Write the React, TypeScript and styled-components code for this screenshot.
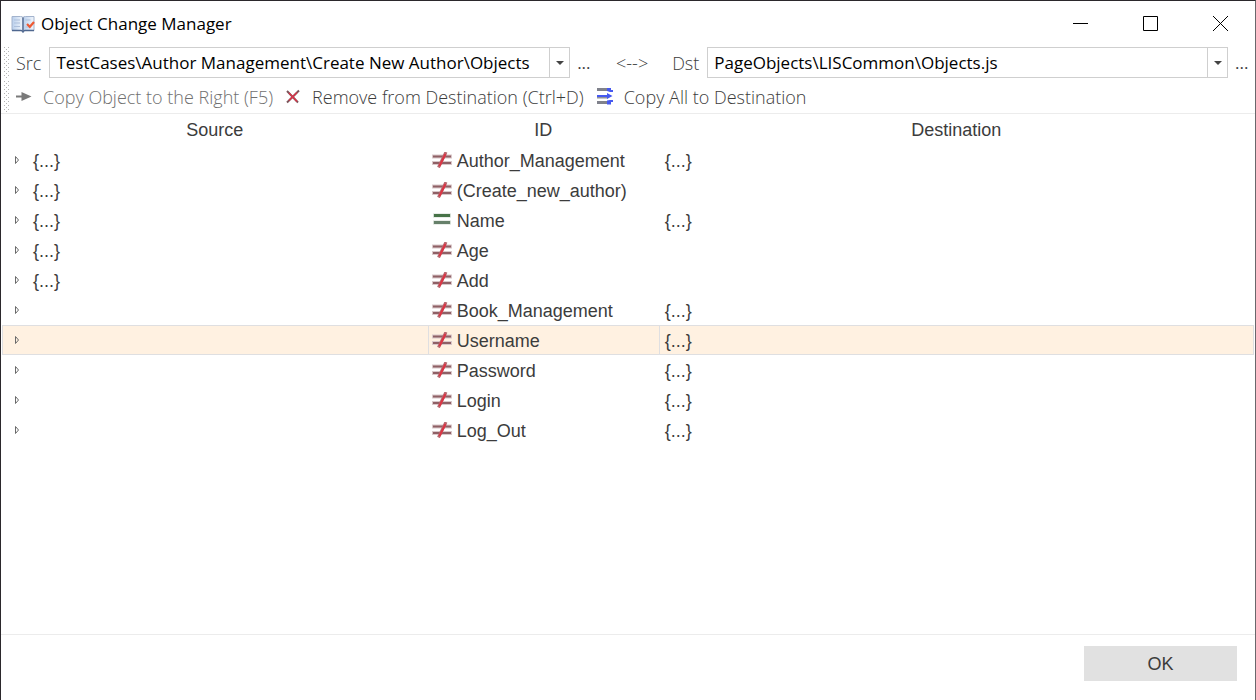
import React from "react";
import styled, { createGlobalStyle } from "styled-components";

const UI_FONT = '"Open Sans", "Noto Sans", sans-serif';
const GRID_FONT = '"Liberation Sans", Arial, sans-serif';

const GlobalStyle = createGlobalStyle`
  *, *::before, *::after { box-sizing: border-box; }
  body { margin: 0; background: #ffffff; }
`;

const Window = styled.main`
  display: flex;
  flex-direction: column;
  min-height: 100vh;
  border: 1px solid #2b282c;
  border-right-color: #6a686c;
  border-bottom: 0;
  background: #ffffff;
  color: #3c3c3c;
  font-family: ${UI_FONT};
  font-size: 18px;
  font-weight: 300;
  line-height: 24px;
`;

const TitleBar = styled.header`
  display: flex;
  align-items: center;
  height: 46px;
  padding-left: 10px;
`;

const Title = styled.h1`
  flex: 1;
  margin: 0 0 0 6px;
  color: #000000;
  font-size: 17px;
  font-weight: 400;
  line-height: 24px;
`;

const CaptionButton = styled.button`
  display: flex;
  align-self: flex-start;
  align-items: center;
  justify-content: center;
  width: 70px;
  height: 44px;
  padding: 0;
  border: 0;
  background: transparent;
`;

const ToolArea = styled.div`
  display: flex;
  flex-direction: column;
  gap: 3px;
  padding-bottom: 1px;
  border-bottom: 1px solid #ececec;
`;

const Toolbar = styled.div`
  display: flex;
  align-items: center;
  height: 31px;
  padding: 0 8px 0 3px;
`;

const Grip = styled.span`
  flex: none;
  align-self: stretch;
  width: 6px;
  margin-right: 6px;
  background:
    conic-gradient(at 1px 1px, transparent 75%, #b4b4b4 0) 0 0 / 4px 4px,
    conic-gradient(at 1px 1px, transparent 75%, #b4b4b4 0) 2px 2px / 4px 4px;
`;

const FieldLabel = styled.label`
  flex: none;
  margin-right: 8px;
`;

const Combo = styled.span`
  display: grid;
  flex: 1 1 0;
  min-width: 0;
  height: 31px;
`;

const ComboSelect = styled.select`
  grid-area: 1 / 1;
  min-width: 0;
  padding: 0 24px 0 6px;
  appearance: none;
  border: 1px solid #cfcfcf;
  border-radius: 0;
  background: #ffffff;
  color: #000000;
  font-family: ${UI_FONT};
  font-size: 17px;
  font-weight: 400;
`;

const ComboArrow = styled.span`
  display: flex;
  grid-area: 1 / 1;
  justify-self: end;
  align-items: center;
  justify-content: center;
  width: 21px;
  border: 1px solid #cfcfcf;
  pointer-events: none;
`;

const BrowseButton = styled.button`
  flex: none;
  width: 12px;
  margin-left: 7px;
  padding: 0;
  border: 0;
  background: transparent;
  color: #3c3c3c;
  font: inherit;
  font-weight: 400;
  font-size: 17px;
`;

const Direction = styled.span`
  flex: none;
  min-width: 36px;
  margin: 0 22px 0 25px;
  text-align: center;
`;

const ToolButton = styled.button`
  display: flex;
  align-items: center;
  gap: 11px;
  margin-right: 12px;
  padding: 0;
  border: 0;
  background: transparent;
  color: #3c3c3c;
  font: inherit;
  white-space: nowrap;

  &:disabled { color: #707070; }
`;

const GridArea = styled.section`
  flex: 1;
  padding: 1px 1px 0;
`;

const Grid = styled.table`
  width: 100%;
  border-collapse: collapse;
  table-layout: fixed;
  font-family: ${GRID_FONT};
  font-size: 18px;
  font-weight: 400;
  line-height: 20px;
`;

const HeadCell = styled.th<{ $width?: string }>`
  width: ${(p) => p.$width ?? "auto"};
  height: 30px;
  padding: 0;
  font-weight: 400;
  text-align: center;
`;

const Row = styled.tr<{ $selected?: boolean }>`
  background: ${(p) => (p.$selected ? "#fff1e1" : "transparent")};
  box-shadow: ${(p) => (p.$selected ? "inset 0 0 0 1px #dfdfe1" : "none")};

  td + td {
    box-shadow: ${(p) => (p.$selected ? "inset 1px 0 0 #dfdfe1" : "none")};
  }
`;

const Cell = styled.td`
  height: 30px;
  padding: 0;
`;

const CellContent = styled.div<{ $gap: number; $indent: number }>`
  display: flex;
  align-items: center;
  gap: ${(p) => p.$gap}px;
  padding-left: ${(p) => p.$indent}px;
`;

const CellText = styled.span`
  padding-top: 2px;
`;

const Expander = styled.button`
  display: flex;
  flex: none;
  padding: 0;
  border: 0;
  background: transparent;
`;

const Footer = styled.footer`
  display: flex;
  justify-content: flex-end;
  height: 66px;
  padding: 11px 18px 0;
  border-top: 1px solid #ececec;
`;

const OkButton = styled.button`
  width: 153px;
  height: 35px;
  padding: 2px 0 0;
  border: 0;
  background: #e1e1e1;
  color: #3c3c3c;
  font-family: ${GRID_FONT};
  font-size: 18px;
`;

const BookIcon = () => (
  <svg width="24" height="18" viewBox="0 0 24 18" aria-hidden="true">
    <defs>
      <linearGradient id="page" x1="0" y1="0" x2="1" y2="0">
        <stop offset="0" stopColor="#b9cfec" />
        <stop offset="1" stopColor="#f3f7fc" />
      </linearGradient>
    </defs>
    <path d="M1 1.500h8.500q1.800 0 2.500 1v14q-1-1-2.500-1H1z" fill="url(#page)" stroke="#a3b3cd" />
    <path d="M23 1.500h-8.500q-1.800 0-2.500 1v14q1-1 2.500-1H23z" fill="url(#page)" stroke="#a3b3cd" />
    <path d="M1 15.500h9q1.500 0 2 1.300q.5-1.300 2-1.300h9" fill="none" stroke="#4f678f" strokeWidth="1.500" />
    <path d="M12 2.500v14" stroke="#5f7499" strokeWidth="1.500" />
    <path d="M3 5h6M3 8h6M3 11.500h6M14.500 5h5M14.500 12h5" stroke="#adbfdb" />
    <path d="M16 9l2.800 2.800L23 7" fill="none" stroke="#ee5a33" strokeWidth="2.200" />
  </svg>
);

const ArrowIcon = () => (
  <svg width="16" height="16" viewBox="0 0 16 16" aria-hidden="true">
    <path d="M0 6.500h5.500V3L15.500 7.500L5.500 12V8.500H0z" fill="#7a7a7a" />
  </svg>
);

const RemoveIcon = () => (
  <svg width="16" height="16" viewBox="0 0 16 16" aria-hidden="true">
    <path d="M2 2L13 13.500M14 1.500L2 13.500" stroke="#7a555b" strokeWidth="2" />
    <path d="M4 4L12 12.500M12 3.500L4 11.500" stroke="#d8364a" strokeWidth="1.500" />
  </svg>
);

const CopyAllIcon = () => (
  <svg width="17" height="17" viewBox="0 0 17 17" aria-hidden="true">
    <path d="M1 1.500h11M1 14.500h11" stroke="#80828c" strokeWidth="3" />
    <path d="M1 9.500h11" stroke="#90929c" strokeWidth="2" />
    <path d="M1 8h14" stroke="#4659f0" strokeWidth="2" />
    <path d="M11 0h4v2h2v2h-3l-3-1zM11 5l5.500 3l-5.500 3zM11 12.500l3-.5h3v2h-2v2.500h-4z" fill="#4659f0" />
  </svg>
);

const NotEqualIcon = () => (
  <svg width="20" height="16" viewBox="0 0 20 16" aria-hidden="true">
    <path d="M0 4.500h20M0 11h20" stroke="#d9c8ca" strokeWidth="4" />
    <path d="M1 4.500h18M1 11h18" stroke="#8f6065" strokeWidth="2" />
    <path d="M14 0L6.500 15.500" stroke="#b9686f" strokeWidth="3" />
    <path d="M13.500 2L7.500 14" stroke="#dc3444" strokeWidth="2" />
  </svg>
);

const EqualIcon = () => (
  <svg width="20" height="16" viewBox="0 0 20 16" aria-hidden="true">
    <path d="M1 3.500h18M1 10.500h18" stroke="#d3dcd4" strokeWidth="4" />
    <path d="M2 3.500h16" stroke="#477348" strokeWidth="3" />
    <path d="M2 10.500h16" stroke="#66806a" strokeWidth="3" />
  </svg>
);

type Item = { id: string; src: boolean; dst: boolean; equal?: boolean; selected?: boolean };

const ITEMS: Item[] = [
  { id: "Author_Management", src: true, dst: true },
  { id: "(Create_new_author)", src: true, dst: false },
  { id: "Name", src: true, dst: true, equal: true },
  { id: "Age", src: true, dst: false },
  { id: "Add", src: true, dst: false },
  { id: "Book_Management", src: false, dst: true },
  { id: "Username", src: false, dst: true, selected: true },
  { id: "Password", src: false, dst: true },
  { id: "Login", src: false, dst: true },
  { id: "Log_Out", src: false, dst: true },
];

const PathCombo = ({ id, label, value }: { id: string; label: string; value: string }) => (
  <>
    <FieldLabel htmlFor={id}>{label}</FieldLabel>
    <Combo>
      <ComboSelect id={id} defaultValue={value}>
        <option>{value}</option>
      </ComboSelect>
      <ComboArrow>
        <svg width="8" height="4" viewBox="0 0 8 4" aria-hidden="true">
          <path d="M0 0h8L4 4z" fill="#444444" />
        </svg>
      </ComboArrow>
    </Combo>
    <BrowseButton type="button" aria-label={`Browse ${label}`}>...</BrowseButton>
  </>
);

export default function App() {
  return (
    <>
      <GlobalStyle />
      <Window>
        <TitleBar>
          <BookIcon />
          <Title>Object Change Manager</Title>
          <CaptionButton type="button" aria-label="Minimize">
            <svg width="15" height="15"><path d="M0 7.500h15" stroke="#000" /></svg>
          </CaptionButton>
          <CaptionButton type="button" aria-label="Maximize">
            <svg width="15" height="15"><path d="M.5 .5h14v14H.5z" fill="none" stroke="#000" /></svg>
          </CaptionButton>
          <CaptionButton type="button" aria-label="Close">
            <svg width="15" height="15"><path d="M0 0l15 15M15 0L0 15" stroke="#000" /></svg>
          </CaptionButton>
        </TitleBar>
        <ToolArea>
          <Toolbar>
            <Grip />
            <PathCombo id="src" label="Src" value="TestCases\Author Management\Create New Author\Objects" />
            <Direction>{"<-->"}</Direction>
            <PathCombo id="dst" label="Dst" value="PageObjects\LISCommon\Objects.js" />
          </Toolbar>
          <Toolbar>
            <Grip />
            <ToolButton type="button" disabled><ArrowIcon />Copy Object to the Right (F5)</ToolButton>
            <ToolButton type="button"><RemoveIcon />Remove from Destination (Ctrl+D)</ToolButton>
            <ToolButton type="button"><CopyAllIcon />Copy All to Destination</ToolButton>
          </Toolbar>
        </ToolArea>
        <GridArea>
          <Grid>
            <thead>
              <tr>
                <HeadCell scope="col" $width="34%">Source</HeadCell>
                <HeadCell scope="col" $width="231px">ID</HeadCell>
                <HeadCell scope="col">Destination</HeadCell>
              </tr>
            </thead>
            <tbody>
              {ITEMS.map((item) => (
                <Row key={item.id} $selected={item.selected}>
                  <Cell>
                    <CellContent $gap={11} $indent={12}>
                      <Expander type="button" aria-label={`Expand ${item.id}`}>
                        <svg width="8" height="10" viewBox="0 0 8 10">
                          <path d="M1.500 1.500v7L4.500 5z" fill="none" stroke="#6a6a6a" />
                        </svg>
                      </Expander>
                      {item.src && <CellText>{"{...}"}</CellText>}
                    </CellContent>
                  </Cell>
                  <Cell>
                    <CellContent $gap={5} $indent={4}>
                      {item.equal ? <EqualIcon /> : <NotEqualIcon />}
                      <CellText>{item.id}</CellText>
                    </CellContent>
                  </Cell>
                  <Cell>
                    <CellContent $gap={0} $indent={6}>
                      {item.dst && <CellText>{"{...}"}</CellText>}
                    </CellContent>
                  </Cell>
                </Row>
              ))}
            </tbody>
          </Grid>
        </GridArea>
        <Footer>
          <OkButton type="button">OK</OkButton>
        </Footer>
      </Window>
    </>
  );
}
